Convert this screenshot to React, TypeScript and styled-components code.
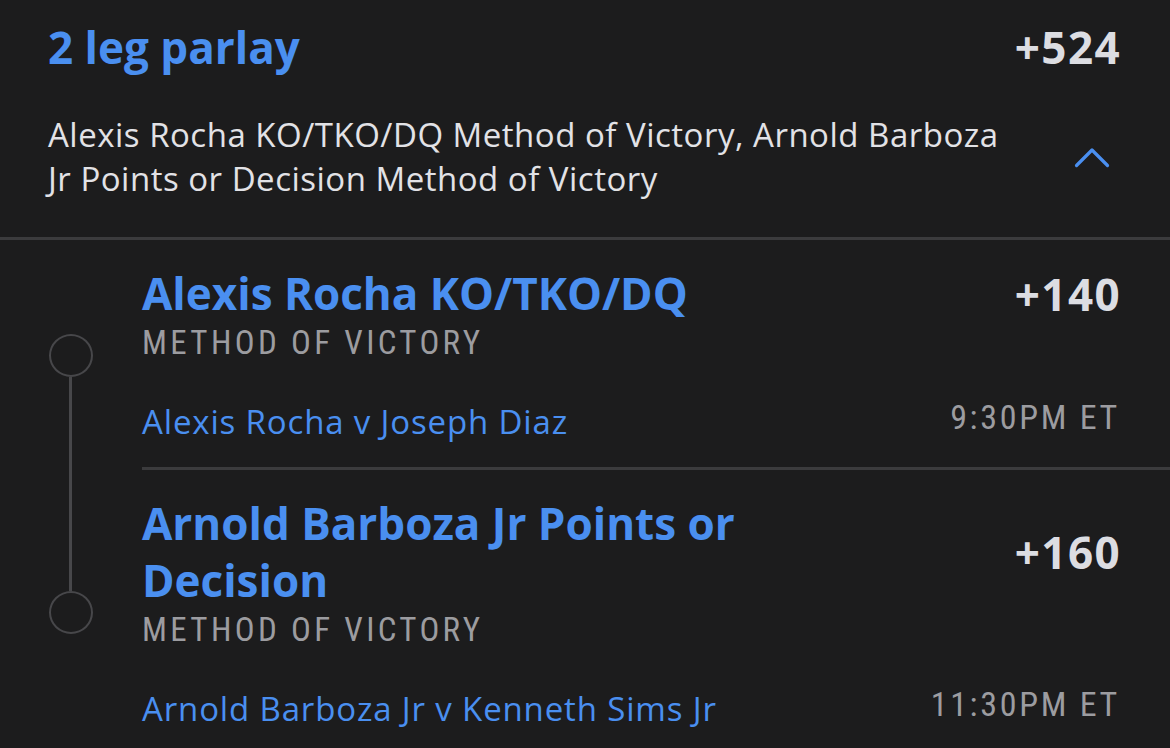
import React from "react";
import styled, { createGlobalStyle } from "styled-components";

const Global = createGlobalStyle`
  html, body { margin: 0; padding: 0; background: #1c1c1d; }
  body { font-family: "Open Sans", "Lato", sans-serif; -webkit-font-smoothing: antialiased; }
  * { box-sizing: border-box; }
`;

const BLUE = "#4a8ff0";
const LINE = "#3b3b3d";

const Page = styled.div`
  width: 1170px;
  height: 748px;
  overflow: hidden;
  background: #1c1c1d;
`;

const Header = styled.section`
  padding: 21px 50px 36px 48px;
  border-bottom: 3px solid ${LINE};
`;

const HeaderTop = styled.div`
  display: flex;
  justify-content: space-between;
  align-items: center;
`;

const ParlayTitle = styled.h1`
  margin: 0;
  font-size: 44px;
  line-height: 52px;
  font-weight: 700;
  color: ${BLUE};
`;

const Odds = styled.div`
  font-size: 44px;
  line-height: 52px;
  font-weight: 700;
  color: #dcdde2;
  letter-spacing: 1.4px;
  margin-right: -1px;
  flex: none;
`;

const HeaderBottom = styled.div`
  margin-top: 40px;
  display: flex;
  justify-content: space-between;
  align-items: center;
`;

const Description = styled.p`
  margin: 0;
  max-width: 960px;
  font-size: 33px;
  line-height: 44px;
  letter-spacing: 0.5px;
  color: #e2e2e6;
`;

const Chevron = styled.svg`
  width: 36px;
  height: 22px;
  margin-right: 10px;
  flex: none;
`;

const Leg = styled.div`
  display: grid;
  grid-template-columns: 142px 1fr;
`;

const Gutter = styled.div`
  display: flex;
  flex-direction: column;
  align-items: center;
  width: 141px;
`;

const Segment = styled.div<{ $on: boolean }>`
  flex: 1;
  width: 2.5px;
  background: ${(p) => (p.$on ? "#47474a" : "transparent")};
`;

const Node = styled.div`
  width: 44px;
  height: 43px;
  border-radius: 50%;
  border: 2.5px solid #47474a;
  flex: none;
`;

const LegBody = styled.div<{ $last?: boolean }>`
  padding: 25px 50px 25px 0;
  border-bottom: ${(p) => (p.$last ? "none" : `3px solid ${LINE}`)};
`;

const LegTop = styled.div`
  display: flex;
  justify-content: space-between;
  align-items: center;
  gap: 40px;
`;

const LegTitle = styled.div`
  max-width: 780px;
  font-size: 44px;
  line-height: 57px;
  font-weight: 700;
  color: ${BLUE};
`;

const Market = styled.div`
  margin-top: 3px;
  font-family: "Roboto", "Liberation Sans", sans-serif;
  font-stretch: 85%;
  font-size: 33px;
  line-height: 36px;
  letter-spacing: 3.35px;
  color: #9c9ca0;
  text-transform: uppercase;
`;

const LegBottom = styled.div`
  margin-top: 41px;
  display: flex;
  justify-content: space-between;
  align-items: flex-start;
`;

const Matchup = styled.div`
  font-size: 33px;
  line-height: 40px;
  letter-spacing: 0.85px;
  color: ${BLUE};
`;

const Time = styled.div`
  margin-top: -3px;
  font-family: "Roboto", "Liberation Sans", sans-serif;
  font-stretch: 85%;
  font-size: 34px;
  line-height: 36px;
  letter-spacing: 2.7px;
  color: #9c9ca0;
`;

type LegData = {
  title: string;
  market: string;
  odds: string;
  matchup: string;
  time: string;
};

const legs: LegData[] = [
  {
    title: "Alexis Rocha KO/TKO/DQ",
    market: "Method of Victory",
    odds: "+140",
    matchup: "Alexis Rocha v Joseph Diaz",
    time: "9:30PM ET",
  },
  {
    title: "Arnold Barboza Jr Points or Decision",
    market: "Method of Victory",
    odds: "+160",
    matchup: "Arnold Barboza Jr v Kenneth Sims Jr",
    time: "11:30PM ET",
  },
];

export default function App() {
  return (
    <Page>
      <Global />
      <Header>
        <HeaderTop>
          <ParlayTitle>2 leg parlay</ParlayTitle>
          <Odds>+524</Odds>
        </HeaderTop>
        <HeaderBottom>
          <Description>
            Alexis Rocha KO/TKO/DQ Method of Victory, Arnold Barboza Jr Points or Decision Method of
            Victory
          </Description>
          <Chevron viewBox="0 0 36 22" fill="none">
            <path d="M2.5 19.5 L18 4 L33.5 19.5" stroke={BLUE} strokeWidth="3.2" strokeLinecap="round" strokeLinejoin="round" />
          </Chevron>
        </HeaderBottom>
      </Header>
      {legs.map((leg, i) => (
        <Leg key={leg.title}>
          <Gutter>
            <Segment $on={i > 0} />
            <Node />
            <Segment $on={i < legs.length - 1} />
          </Gutter>
          <LegBody $last={i === legs.length - 1}>
            <LegTop>
              <LegTitle>{leg.title}</LegTitle>
              <Odds>{leg.odds}</Odds>
            </LegTop>
            <Market>{leg.market}</Market>
            <LegBottom>
              <Matchup>{leg.matchup}</Matchup>
              <Time>{leg.time}</Time>
            </LegBottom>
          </LegBody>
        </Leg>
      ))}
    </Page>
  );
}
